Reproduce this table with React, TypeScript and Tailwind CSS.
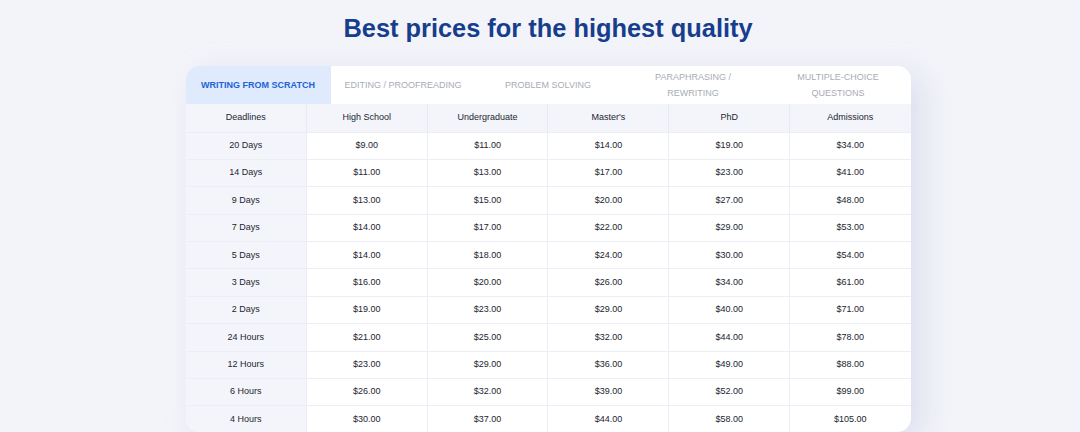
const TABS = [
  ['WRITING FROM SCRATCH'],
  ['EDITING / PROOFREADING'],
  ['PROBLEM SOLVING'],
  ['PARAPHRASING /', 'REWRITING'],
  ['MULTIPLE-CHOICE', 'QUESTIONS'],
];

const HEAD = ['Deadlines', 'High School', 'Undergraduate', "Master's", 'PhD', 'Admissions'];

const ROWS: [string, number[]][] = [
  ['20 Days', [9, 11, 14, 19, 34]],
  ['14 Days', [11, 13, 17, 23, 41]],
  ['9 Days', [13, 15, 20, 27, 48]],
  ['7 Days', [14, 17, 22, 29, 53]],
  ['5 Days', [14, 18, 24, 30, 54]],
  ['3 Days', [16, 20, 26, 34, 61]],
  ['2 Days', [19, 23, 29, 40, 71]],
  ['24 Hours', [21, 25, 32, 44, 78]],
  ['12 Hours', [23, 29, 36, 49, 88]],
  ['6 Hours', [26, 32, 39, 52, 99]],
  ['4 Hours', [30, 37, 44, 58, 105]],
];

export default function App() {
  return (
    <div
      className="flex h-[432px] w-[1080px] flex-col items-center overflow-hidden bg-[#f3f4f9] pt-[13px] pl-[16px] text-[#222530]"
      style={{ fontFamily: '"Liberation Sans", Arial, sans-serif' }}
    >
      <h1 className="text-[25.4px] font-bold leading-[30px] text-[#163e8c]">
        Best prices for the highest quality
      </h1>

      <div className="mt-[23px] w-[725px] overflow-hidden rounded-[14px] bg-white shadow-[12px_8px_30px_rgba(180,186,220,0.35)]">
        <div className="grid h-[38px] grid-cols-5">
          {TABS.map((t, i) => (
            <div
              key={i}
              className={
                i === 0
                  ? 'flex flex-col items-center justify-center bg-[#dfeafd] text-[9px] font-bold leading-[13px] text-[#1e63d6]'
                  : 'flex flex-col items-center justify-center text-[9px] leading-[16px] text-[#a8acb6]'
              }
            >
              {t.map((line) => (
                <span key={line}>{line}</span>
              ))}
            </div>
          ))}
        </div>

        <table className="w-full table-fixed border-collapse text-center text-[9px]">
          <thead>
            <tr className="h-[28px] bg-[#f4f5fb]">
              {HEAD.map((h, i) => (
                <th
                  key={h}
                  className={i === 0 ? 'font-normal' : 'border-l border-[#e8eaf4] font-normal'}
                >
                  {h}
                </th>
              ))}
            </tr>
          </thead>
          <tbody>
            {ROWS.map(([d, prices]) => (
              <tr key={d} className="h-[27.4px] border-t border-[#eceef6]">
                <td className="bg-[#f4f5fb]">{d}</td>
                {prices.map((p, i) => (
                  <td key={i} className="border-l border-[#eceef6]">
                    ${p}.00
                  </td>
                ))}
              </tr>
            ))}
          </tbody>
        </table>
      </div>
    </div>
  );
}
